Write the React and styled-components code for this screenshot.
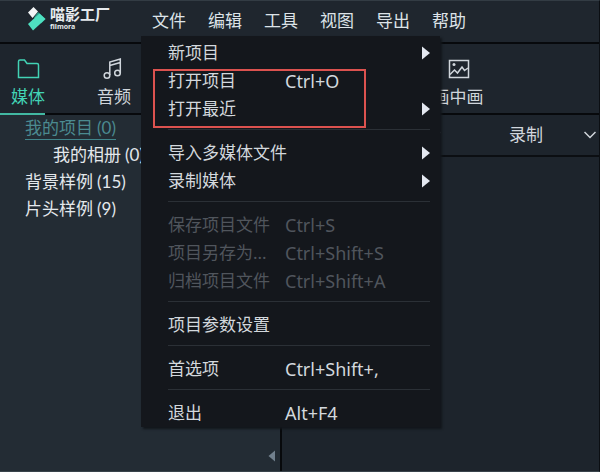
import React from 'react'
import styled, { createGlobalStyle } from 'styled-components'

const GlobalStyle = createGlobalStyle`
  * {
    box-sizing: border-box;
  }

  body {
    margin: 0;
    background: #1d242c;
    color: #dde3e8;
    font: 17px/28px 'Noto Sans', 'Noto Sans CJK SC', sans-serif;
  }

  button {
    padding: 0;
    border: 0;
    background: none;
    color: inherit;
    font: inherit;
    white-space: nowrap;
  }
`

const Window = styled.div`
  position: relative;
  display: flex;
  flex-direction: column;
  min-height: 100vh;
  overflow: hidden;
  border-top: 1px solid #333c44;
  border-bottom: 1px solid #39434b;
  border-right: 1px solid #0b0e12;
`

const TitleBar = styled.header`
  display: flex;
  align-items: center;
  height: 43px;
  padding: 0 0 2px 28px;
  border-bottom: 2px solid #07090c;
  background: #1f262e;
`

const Brand = styled.div`
  display: flex;
  align-items: center;
  gap: 4px;
  width: 124px;
  padding-bottom: 3px;
  color: #e6eaed;
`

const BrandText = styled.div`
  font-weight: 700;
  font-size: 15px;
  line-height: 16px;
`

const BrandLatin = styled.div`
  font: 700 7px/10px 'Noto Sans', sans-serif;
`

const MenuBar = styled.nav`
  display: flex;
  gap: 22px;
`

const Tabs = styled.div`
  display: grid;
  grid-template-columns: repeat(6, 56px);
  column-gap: 30px;
  height: 71px;
  border-bottom: 2px solid #07090c;
  background: #1e252d;
`

const Tab = styled.button`
  position: relative;
  display: flex;
  flex-direction: column;
  align-items: center;
  gap: 3px;
  padding-top: 14px;
  grid-column: ${p => p.$column};
  color: ${p => p.$active ? '#42d3b5' : '#d0d6dc'};

  &::after {
    content: '';
    display: ${p => p.$active ? 'block' : 'none'};
    position: absolute;
    left: 0;
    bottom: -2px;
    width: 45px;
    height: 2px;
    background: #42b8a2;
  }
`

const Body = styled.div`
  display: flex;
  flex: 1;
`

const Sidebar = styled.aside`
  display: flex;
  flex-direction: column;
  width: 282px;
  border-right: 2px solid #07090c;
  background: #232c34;
`

const Tree = styled.ul`
  display: flex;
  flex-direction: column;
  align-items: flex-start;
  margin: 0;
  padding: 0 0 0 25px;
  list-style: none;
`

const TreeItem = styled.li`
  height: 27px;
  padding-left: ${p => p.$nested ? 28 : 0}px;
`

const TreeLink = styled.a`
  display: block;
  height: 25px;
  border-bottom: 1px solid ${p => p.$active ? '#41858b' : 'transparent'};
  color: ${p => p.$active ? '#4b8a90' : '#e3e8ec'};
  font-size: 17px;
  line-height: 25px;
  text-decoration: none;
  white-space: nowrap;
`

const Count = styled.span`
  margin-left: 4px;
  font-family: Lato, sans-serif;
`

const Collapse = styled.button`
  display: flex;
  align-self: flex-end;
  margin: auto 5px 9px 0;
`

const Content = styled.main`
  flex: 1;
`

const Actions = styled.div`
  display: grid;
  grid-template-columns: 162px 1fr;
  height: 42px;
  border-bottom: 2px solid #0b0e12;
`

const Action = styled.button`
  display: grid;
  grid-template-columns: 1fr 12px;
  align-items: center;
  padding-right: 3px;
  padding-left: 24px;
  color: #d0d6dc;

  svg {
    grid-column: 2;
  }
`

const DropDown = styled.div`
  position: absolute;
  top: 35px;
  left: 141px;
  width: 299px;
  padding: 3px 10px 0 27px;
  background: #14171c;
  box-shadow: 2px 2px 2px #12161b;
`

const Item = styled.button`
  display: grid;
  grid-template-columns: 117px 1fr 8px;
  align-items: center;
  width: 100%;
  height: 28px;
  text-align: left;
  color: ${p => p.disabled ? '#50555c' : '#d3d8dd'};
`

const Shortcut = styled.span`
  font-size: 18px;
`

const Separator = styled.hr`
  height: 1px;
  margin: 6px 0 9px;
  border: 0;
  background: #2b3036;
`

const Highlight = styled.div`
  position: absolute;
  top: 33px;
  left: 12px;
  width: 213px;
  height: 59px;
  border: 2px solid #dc524f;
  pointer-events: none;
`

const Logo = () => (
  <svg width='18' height='24' viewBox='0 0 18 24' aria-hidden='true'>
    <path d='M0 5.5L5.5 0L10 4.5L4.5 11Z' fill='#f2f5f6' />
    <path d='M10 5L17.5 12L13 16.5L6 10.5Z' fill='#2c9b88' />
    <path d='M0 17L11.5 6.5L17.5 12L5 23.5Z' fill='#4ee0c0' />
  </svg>
)

const FolderIcon = () => (
  <svg width='24' height='22' viewBox='0 0 24 22' fill='none' stroke='currentColor' strokeWidth='1.5'>
    <path d='M2.500 19.5V3.5Q2.500 2 4 2H8.500L11 5.500H21Q22.500 5.500 22.500 7V19.500Z' />
  </svg>
)

const MusicIcon = () => (
  <svg width='24' height='22' viewBox='0 0 24 22' fill='none' stroke='currentColor' strokeWidth='1.5'>
    <circle cx='5' cy='17.500' r='2.800' />
    <circle cx='15.500' cy='15' r='2.800' />
    <path d='M7.800 17V4L18.300 1V15M7.800 7.500L18.300 4.500' />
  </svg>
)

const PictureIcon = () => (
  <svg width='24' height='22' viewBox='0 0 24 22' fill='none' stroke='currentColor' strokeWidth='1.5'>
    <rect x='3.500' y='2.500' width='19' height='17' />
    <circle cx='8' cy='6.500' r='1.500' fill='currentColor' stroke='none' />
    <path d='M4 16.500L8.500 12L11.500 15L16 9L18.500 12.500L22 10' />
  </svg>
)

const Chevron = () => (
  <svg width='12' height='8' viewBox='0 0 12 8' fill='none' stroke='currentColor' strokeWidth='1.5'>
    <path d='M0.500 1L6 6.500L11.500 1' />
  </svg>
)

const SubmenuArrow = () => (
  <svg width='8' height='14' viewBox='0 0 8 14'>
    <path d='M0 0.500L8 7L0 13.500Z' fill='#e4e8f0' />
  </svg>
)

const menus = ['文件', '编辑', '工具', '视图', '导出', '帮助']

const tabs = [
  { label: '媒体', column: 1, icon: <FolderIcon />, active: true },
  { label: '音频', column: 2, icon: <MusicIcon /> },
  { label: '画中画', column: 6, icon: <PictureIcon /> }
]

const albums = [
  { name: '我的项目', count: 0, active: true },
  { name: '我的相册', count: 0, nested: true },
  { name: '背景样例', count: 15 },
  { name: '片头样例', count: 9 }
]

const fileMenu = [
  [
    { label: '新项目', submenu: true },
    { label: '打开项目', keys: 'Ctrl+O' },
    { label: '打开最近', submenu: true }
  ],
  [
    { label: '导入多媒体文件', submenu: true },
    { label: '录制媒体', submenu: true }
  ],
  [
    { label: '保存项目文件', keys: 'Ctrl+S', disabled: true },
    { label: '项目另存为...', keys: 'Ctrl+Shift+S', disabled: true },
    { label: '归档项目文件', keys: 'Ctrl+Shift+A', disabled: true }
  ],
  [{ label: '项目参数设置' }],
  [{ label: '首选项', keys: 'Ctrl+Shift+,' }],
  [{ label: '退出', keys: 'Alt+F4' }]
]

function FileMenu () {
  return (
    <DropDown>
      {fileMenu.map((group, i) => (
        <React.Fragment key={i}>
          { i > 0 && <Separator /> }
          {group.map(item => (
            <Item key={item.label} disabled={item.disabled}>
              <span>{item.label}</span>
              <Shortcut>{item.keys}</Shortcut>
              { item.submenu && <SubmenuArrow /> }
            </Item>
          ))}
        </React.Fragment>
      ))}
      <Highlight />
    </DropDown>
  )
}

function App () {
  return (
    <Window>
      <GlobalStyle />
      <TitleBar>
        <Brand>
          <Logo />
          <div>
            <BrandText>喵影工厂</BrandText>
            <BrandLatin>filmora</BrandLatin>
          </div>
        </Brand>
        <MenuBar>
          {menus.map(m => <button key={m}>{m}</button>)}
        </MenuBar>
      </TitleBar>
      <Tabs>
        {tabs.map(t => (
          <Tab key={t.label} $column={t.column} $active={t.active}>
            {t.icon}
            {t.label}
          </Tab>
        ))}
      </Tabs>
      <Body>
        <Sidebar>
          <Tree>
            {albums.map(a => (
              <TreeItem key={a.name} $nested={a.nested}>
                <TreeLink href='#' $active={a.active}>{a.name}<Count>({a.count})</Count></TreeLink>
              </TreeItem>
            ))}
          </Tree>
          <Collapse aria-label='收起'>
            <svg width='7' height='12' viewBox='0 0 7 12'>
              <path d='M7 0.500V11.500L0.500 6Z' fill='#71808d' />
            </svg>
          </Collapse>
        </Sidebar>
        <Content>
          <Actions>
            <Action aria-label='导入'><Chevron /></Action>
            <Action>录制<Chevron /></Action>
          </Actions>
        </Content>
      </Body>
      <FileMenu />
    </Window>
  )
}

export default App
